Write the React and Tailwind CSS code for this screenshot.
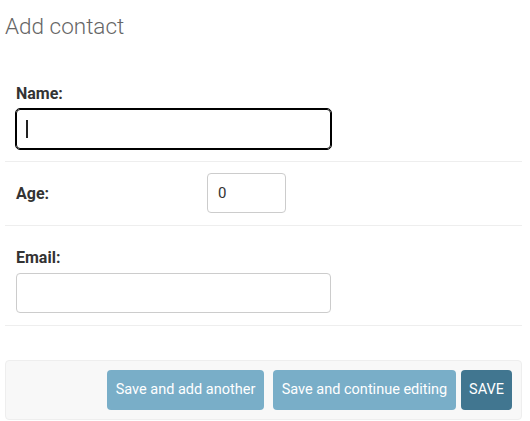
export default function App() {
  return (
    <div className="w-[530px] h-[421px] bg-white pl-[5px] pr-[8px] font-['Roboto',sans-serif] overflow-hidden">
      <h1 className="mt-[14px] mb-[24px] text-[22.5px] leading-[24px] font-light text-[#666]">Add contact</h1>
      <div>
        <div className="border-b border-[#eee] px-[11px] pt-[23px] pb-[12px]">
          <div className="text-[16px] font-bold leading-[17px] text-[#333] mb-[7px]">Name:</div>
          <div className="relative w-[315px] h-[40px] rounded-[4px] border border-black outline outline-1 outline-black">
            <span className="absolute left-[9px] top-[10px] w-[2px] h-[18px] bg-[#222]" />
          </div>
        </div>
        <div className="border-b border-[#eee] px-[11px] pt-[11px] pb-[12px] flex items-center">
          <div className="w-[191px] text-[16px] font-bold leading-[17px] text-[#333]">Age:</div>
          <div className="w-[79px] h-[40px] rounded-[4px] border border-[#ccc] px-[10px] flex items-center text-[15px] text-[#333]">0</div>
        </div>
        <div className="border-b border-[#eee] px-[11px] pt-[23px] pb-[12px]">
          <div className="text-[16px] font-bold leading-[17px] text-[#333] mb-[7px]">Email:</div>
          <div className="w-[315px] h-[40px] rounded-[4px] border border-[#ccc]" />
        </div>
      </div>
      <div className="mt-[34px] h-[60px] rounded-[4px] border border-[#eee] bg-[#f8f8f8] flex items-center justify-end pr-[9px]">
        <div className="w-[157px] h-[40px] rounded-[4px] bg-[#79aec8] text-white text-[14.5px] flex items-center justify-center">Save and add another</div>
        <div className="ml-[9px] w-[183px] h-[40px] rounded-[4px] bg-[#79aec8] text-white text-[14.5px] flex items-center justify-center">Save and continue editing</div>
        <div className="ml-[5px] w-[51px] h-[40px] rounded-[4px] bg-[#417690] text-white text-[14.5px] flex items-center justify-center">SAVE</div>
      </div>
    </div>
  );
}
